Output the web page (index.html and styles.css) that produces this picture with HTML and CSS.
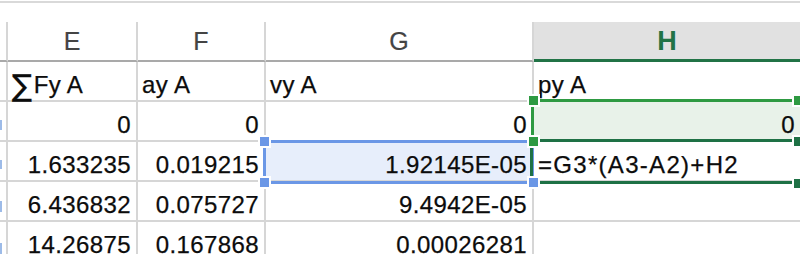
FILE: index.html
```html
<!DOCTYPE html>
<html>
<head>
<meta charset="utf-8">
<link rel="stylesheet" href="styles.css">
</head>
<body>
<div class="sheet">
  <div class="topbar"><div class="topline"></div></div>
  <div class="grid">
    <div class="cell stub hdr"></div>
    <div class="cell colhdr">E</div>
    <div class="cell colhdr">F</div>
    <div class="cell colhdr">G</div>
    <div class="cell colhdr active">H</div>

    <div class="cell stub"></div>
    <div class="cell txt"><span class="sigma">∑</span>Fy A</div>
    <div class="cell txt">ay A</div>
    <div class="cell txt">vy A</div>
    <div class="cell txt last">py A</div>

    <div class="cell stub"><span class="rn rn-2"></span></div>
    <div class="cell num">0</div>
    <div class="cell num">0</div>
    <div class="cell num">0</div>
    <div class="cell num last">0</div>

    <div class="cell stub"><span class="rn rn-3"></span></div>
    <div class="cell num">1.633235</div>
    <div class="cell num">0.019215</div>
    <div class="cell num">1.92145E-05</div>
    <div class="cell txt formula last">=G3*(A3-A2)+H2</div>

    <div class="cell stub"><span class="rn rn-4"></span></div>
    <div class="cell num">6.436832</div>
    <div class="cell num">0.075727</div>
    <div class="cell num">9.4942E-05</div>
    <div class="cell last"></div>

    <div class="cell stub"><span class="rn rn-5"></span></div>
    <div class="cell num">14.26875</div>
    <div class="cell num">0.167868</div>
    <div class="cell num">0.00026281</div>
    <div class="cell last"></div>
  </div>

  <div class="fill fill-blue"></div>
  <div class="fill fill-green"></div>
  <div class="box box-blue"></div>
  <div class="box box-green"></div>
  <div class="box box-active"></div>

  <div class="handle h-blue h-g3-tl"></div>
  <div class="handle h-blue h-g3-bl"></div>
  <div class="handle h-blue h-g3-br"></div>
  <div class="handle h-green h-h2-tl"></div>
  <div class="handle h-green h-h2-tr"></div>
  <div class="handle h-green h-h2-bl"></div>
  <div class="handle h-dark h-h3-tr"></div>
  <div class="handle h-dark h-h3-br"></div>
</div>
</body>
</html>
```
FILE: styles.css
```css
html, body {
  margin: 0;
  padding: 0;
  background: #ffffff;
}

.sheet {
  position: relative;
  width: 800px;
  height: 254px;
  overflow: hidden;
  background: #ffffff;
  font-family: "Liberation Sans", Arial, sans-serif;
}

.topbar {
  height: 22px;
  padding-top: 1px;
  box-sizing: border-box;
}

.topline {
  height: 2px;
  background: #d9d9d9;
}

.grid {
  display: grid;
  grid-template-columns: 8px 130px 128px 268px 266px;
  grid-auto-rows: 40px;
  position: relative;
  z-index: 1;
}

.cell {
  box-sizing: border-box;
  border-right: 2px solid #d6d6d6;
  border-bottom: 2px solid #d6d6d6;
  display: flex;
  align-items: flex-end;
  padding: 0 5px 3px 5px;
  font-size: 24px;
  line-height: 24px;
  letter-spacing: 0.4px;
  color: #0c0c0c;
  -webkit-text-stroke: 0.25px #0c0c0c;
  white-space: nowrap;
}

.cell.last {
  border-right: none;
}

.stub {
  padding: 0;
  align-items: center;
  justify-content: flex-start;
}

.rn {
  display: block;
  width: 2px;
  background: #9dbbe8;
}

.rn-2 { height: 10px; margin-top: 8px; }
.rn-3 { height: 9px; margin-top: 6px; }
.rn-4 { height: 11px; margin-top: 10px; }
.rn-5 { height: 11px; margin-top: 14px; }

.hdr,
.colhdr {
  border-bottom-color: #a9a9a9;
}

.colhdr {
  align-items: center;
  justify-content: center;
  padding: 0;
  font-size: 25px;
  line-height: 25px;
  color: #444444;
  -webkit-text-stroke: 0.2px #444444;
  letter-spacing: 0;
}

.colhdr.active {
  background: #e1e1e1;
  color: #217346;
  -webkit-text-stroke: 0;
  font-weight: bold;
  font-size: 27px;
  border-right: none;
  border-bottom: 3px solid #217346;
  padding-top: 2px;
}

.sigma {
  font-family: "DejaVu Sans", sans-serif;
  font-size: 30px;
  line-height: 24px;
  position: relative;
  top: 1px;
  margin-right: 1px;
}

.num {
  justify-content: flex-end;
}

.txt {
  justify-content: flex-start;
  padding-left: 4px;
}

.formula {
  letter-spacing: 1.3px;
  padding-left: 4px;
  position: relative;
  z-index: 5;
}

/* reference highlight overlays */
.fill {
  position: absolute;
  z-index: 0;
}

.fill-blue {
  left: 266px;
  top: 142px;
  width: 266px;
  height: 38px;
  background: #e7eefb;
}

.fill-green {
  left: 534px;
  top: 102px;
  width: 266px;
  height: 38px;
  background: #e8f2e9;
}

.box {
  position: absolute;
  box-sizing: border-box;
  z-index: 2;
}

.box-blue {
  left: 263px;
  top: 140px;
  width: 271px;
  height: 44px;
  border: 3px solid #6b97e6;
}

.box-green {
  left: 531px;
  top: 99px;
  width: 275px;
  height: 43px;
  border: 3px solid #2e9a42;
}

.box-active {
  left: 530px;
  top: 139px;
  width: 276px;
  height: 45px;
  border: 3px solid #1e7145;
  z-index: 3;
}

.handle {
  position: absolute;
  width: 9px;
  height: 9px;
  box-shadow: 0 0 0 2px #ffffff;
  z-index: 4;
}

.h-blue { background: #6b97e6; }
.h-green { background: #2e9a42; }
.h-dark { background: #1e7145; }

.h-g3-tl { left: 260px; top: 137px; }
.h-g3-bl { left: 260px; top: 178px; }
.h-g3-br { left: 529px; top: 178px; }
.h-h2-tl { left: 529px; top: 96px; }
.h-h2-tr { left: 794px; top: 96px; }
.h-h2-bl { left: 529px; top: 137px; }
.h-h3-tr { left: 794px; top: 137px; }
.h-h3-br { left: 794px; top: 179px; }
```
